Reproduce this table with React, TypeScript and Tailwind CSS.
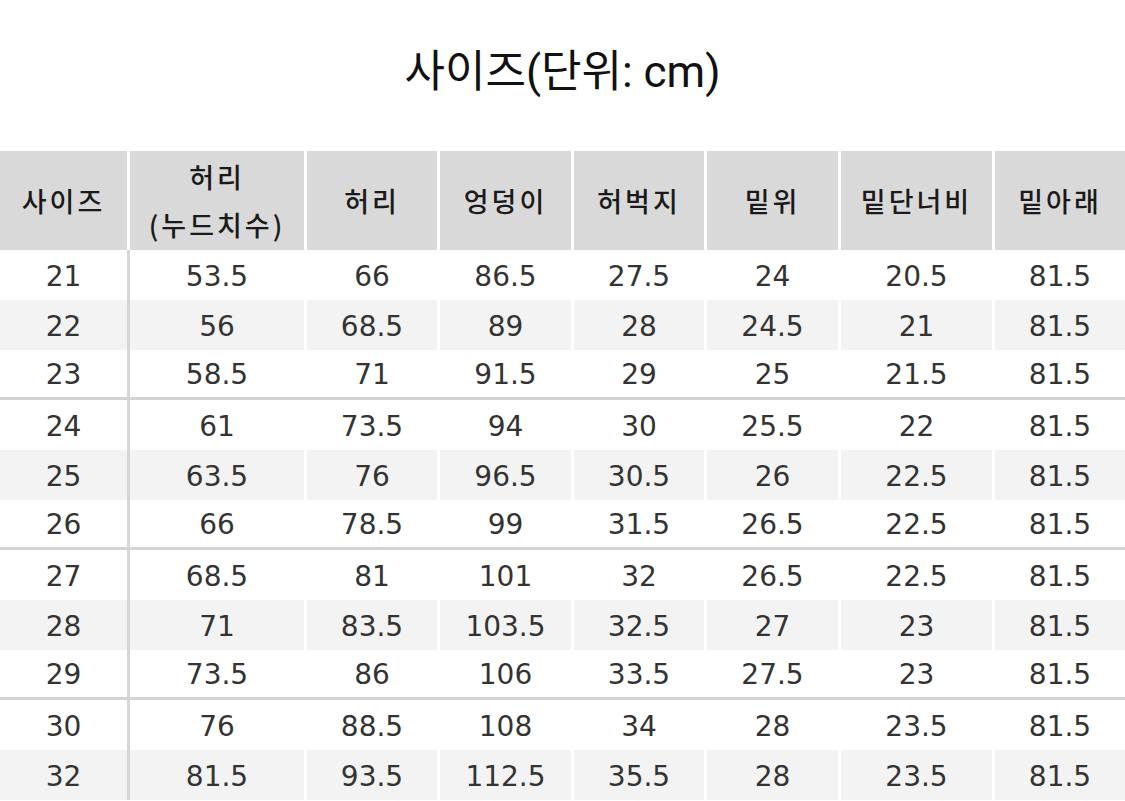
const headers = [
  ["사이즈"],
  ["허리", "(누드치수)"],
  ["허리"],
  ["엉덩이"],
  ["허벅지"],
  ["밑위"],
  ["밑단너비"],
  ["밑아래"],
];

const rows = [
  ["21", "53.5", "66", "86.5", "27.5", "24", "20.5", "81.5"],
  ["22", "56", "68.5", "89", "28", "24.5", "21", "81.5"],
  ["23", "58.5", "71", "91.5", "29", "25", "21.5", "81.5"],
  ["24", "61", "73.5", "94", "30", "25.5", "22", "81.5"],
  ["25", "63.5", "76", "96.5", "30.5", "26", "22.5", "81.5"],
  ["26", "66", "78.5", "99", "31.5", "26.5", "22.5", "81.5"],
  ["27", "68.5", "81", "101", "32", "26.5", "22.5", "81.5"],
  ["28", "71", "83.5", "103.5", "32.5", "27", "23", "81.5"],
  ["29", "73.5", "86", "106", "33.5", "27.5", "23", "81.5"],
  ["30", "76", "88.5", "108", "34", "28", "23.5", "81.5"],
  ["32", "81.5", "93.5", "112.5", "35.5", "28", "23.5", "81.5"],
];

const cols = "grid grid-cols-[130px_177px_133px_134px_133px_134px_154px_130px]";

export default function App() {
  return (
    <div className="w-[1125px] h-[801px] bg-white overflow-hidden">
      <h1 className="h-[151px] pt-[43px] text-center text-[44px] leading-[58px] text-[#111] font-['Roboto','Noto_Sans_CJK_KR',sans-serif]">
        사이즈(단위: cm)
      </h1>

      <div className={`${cols} h-[99px]`}>
        {headers.map((h, i) => (
          <div key={i} className={i < headers.length - 1 ? "pr-[3px]" : ""}>
            <div className="h-full bg-[#d9d9d9] flex flex-col items-center justify-center text-[27px] leading-[48px] tracking-[3px] font-medium text-[#1a1a1a] font-['Noto_Sans_CJK_KR',sans-serif]">
              {h.map((line) => (
                <span key={line}>{line}</span>
              ))}
            </div>
          </div>
        ))}
      </div>

      {rows.map((row, r) => {
        const shaded = r % 3 === 1;
        const divider = r % 3 === 2 && r < rows.length - 1;
        return (
          <div
            key={row[0]}
            className={`${cols} h-[50px] ${divider ? "border-b-[3px] border-[#d3d3d3]" : ""}`}
          >
            {row.map((v, c) => (
              <div
                key={c}
                className={c === 0 ? "border-r-[3px] border-[#d6d6d6]" : c < row.length - 1 ? "pr-[3px]" : ""}
              >
                <div
                  className={`h-full flex items-center justify-center pt-[3px] text-[28px] text-[#333] font-['DejaVu_Sans',sans-serif] ${
                    shaded ? "bg-[#f3f3f3]" : "bg-white"
                  }`}
                >
                  {v}
                </div>
              </div>
            ))}
          </div>
        );
      })}
    </div>
  );
}
